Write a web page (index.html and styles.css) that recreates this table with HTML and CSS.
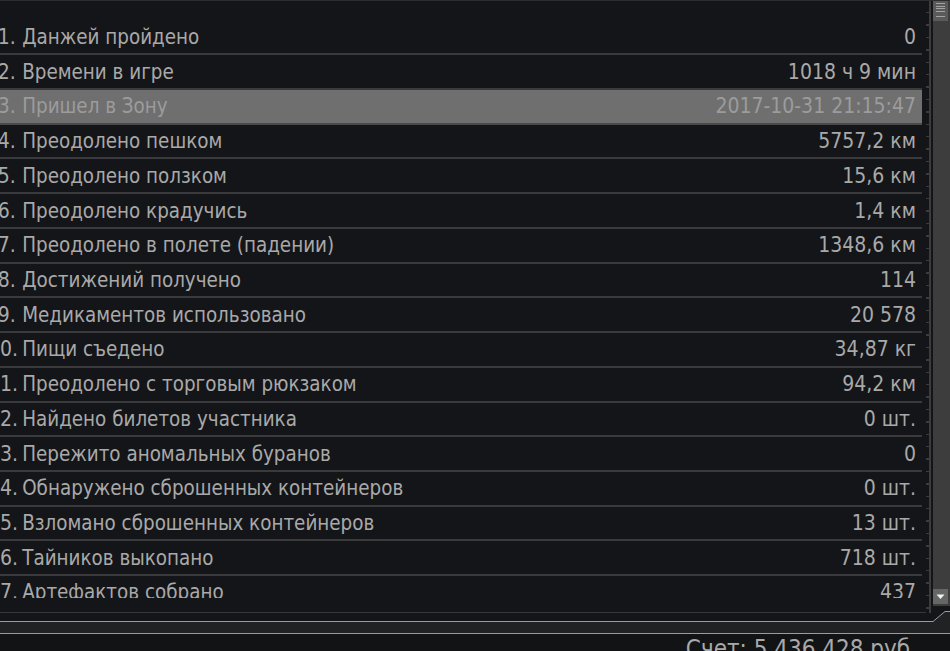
FILE: index.html
```html
<!DOCTYPE html>
<html lang="ru">
<head>
<meta charset="utf-8">
<title>Статистика</title>
<link rel="stylesheet" href="styles.css">
</head>
<body>
<div class="screen">
  <div class="main">
    <div class="listcol">
      <div class="viewport">
        <ul class="rows">
          <li class="row"><span class="num">1.</span><span class="label">Данжей пройдено</span><span class="val">0</span></li>
          <li class="row"><span class="num">2.</span><span class="label">Времени в игре</span><span class="val">1018 ч 9 мин</span></li>
          <li class="row sel"><span class="num">3.</span><span class="label">Пришел в Зону</span><span class="val">2017-10-31 21:15:47</span></li>
          <li class="row"><span class="num">4.</span><span class="label">Преодолено пешком</span><span class="val">5757,2 км</span></li>
          <li class="row"><span class="num">5.</span><span class="label">Преодолено ползком</span><span class="val">15,6 км</span></li>
          <li class="row"><span class="num">6.</span><span class="label">Преодолено крадучись</span><span class="val">1,4 км</span></li>
          <li class="row"><span class="num">7.</span><span class="label">Преодолено в полете (падении)</span><span class="val">1348,6 км</span></li>
          <li class="row"><span class="num">8.</span><span class="label">Достижений получено</span><span class="val">114</span></li>
          <li class="row"><span class="num">9.</span><span class="label">Медикаментов использовано</span><span class="val">20 578</span></li>
          <li class="row"><span class="num">10.</span><span class="label">Пищи съедено</span><span class="val">34,87 кг</span></li>
          <li class="row"><span class="num">11.</span><span class="label">Преодолено с торговым рюкзаком</span><span class="val">94,2 км</span></li>
          <li class="row"><span class="num">12.</span><span class="label">Найдено билетов участника</span><span class="val">0 шт.</span></li>
          <li class="row"><span class="num">13.</span><span class="label">Пережито аномальных буранов</span><span class="val">0</span></li>
          <li class="row"><span class="num">14.</span><span class="label">Обнаружено сброшенных контейнеров</span><span class="val">0 шт.</span></li>
          <li class="row"><span class="num">15.</span><span class="label">Взломано сброшенных контейнеров</span><span class="val">13 шт.</span></li>
          <li class="row"><span class="num">16.</span><span class="label">Тайников выкопано</span><span class="val">718 шт.</span></li>
          <li class="row"><span class="num">17.</span><span class="label">Артефактов собрано</span><span class="val">437</span></li>
        </ul>
      </div>
    </div>
    <div class="ticks"></div>
    <div class="sbline"></div>
    <div class="sbgap"></div>
    <div class="track">
      <div class="thumb"></div>
      <div class="spacer"></div>
      <div class="btn">
        <svg width="15" height="15" viewBox="0 0 15 15"><path d="M3.5 5.5 H11.5 L7.5 10 Z" fill="#f2f2f2"/></svg>
      </div>
    </div>
  </div>
  <div class="frame">
    <svg class="corner" width="17" height="12" viewBox="0 0 17 12">
      <polygon points="0,10.5 12,0.5 17,0.5 17,12 0,12" fill="#212224"/>
      <polyline points="0,10.5 12,0.5 17,0.5" fill="none" stroke="#9a9aaa" stroke-width="1"/>
    </svg>
  </div>
  <div class="footer">Счет: 5 436 428 руб.</div>
</div>
</body>
</html>
```

FILE: styles.css
```css
html, body {
  margin: 0;
  padding: 0;
}
body {
  background: #141518;
  width: 950px;
  height: 651px;
  overflow: hidden;
  font-family: "DejaVu Sans Condensed", "DejaVu Sans", sans-serif;
  color: #a9a9a9;
}
.screen {
  width: 950px;
  height: 651px;
  overflow: hidden;
  display: flex;
  flex-direction: column;
}
.main {
  display: flex;
  height: 612px;
  border-top: 1px solid #2d2d2f;
  flex: none;
}
.listcol {
  width: 926px;
  display: flex;
  flex-direction: column;
  border-bottom: 1px solid #38383a;
}
.viewport {
  height: 597px;
  overflow: hidden;
}
.rows {
  list-style: none;
  margin: 0 0 0 -12px;
  padding: 19.6px 0 0 0;
  width: 934px;
}
.row {
  display: flex;
  align-items: center;
  height: 32.73px;
  border-bottom: 2px solid #3a3a3c;
  font-size: 21px;
  padding-right: 6px;
  white-space: nowrap;
}
.row.sel {
  background: #6f6f6f;
  color: #9c9c9c;
  border-bottom-color: #4a4a4a;
}
.num {
  width: 27.7px;
  text-align: right;
  flex: none;
}
.label {
  padding-left: 6.5px;
  font-size: 20.4px;
  flex: 1;
}
.val {
  text-align: right;
}
.ticks {
  width: 3px;
  background: repeating-linear-gradient(to bottom, transparent 0, transparent 11px, #3c3c3e 11px, #3c3c3e 12.4px);
}
.sbline {
  width: 2px;
  background: #3c3c3e;
}
.sbgap {
  width: 2px;
}
.track {
  width: 17px;
  height: 605px;
  background: #3d3d3e;
  display: flex;
  flex-direction: column;
  align-items: flex-start;
}
.thumb {
  width: 15px;
  height: 20px;
  background: #5a5a5b repeating-linear-gradient(to bottom, transparent 0, transparent 1.5px, #a2a2a2 1.5px, #a2a2a2 2.5px) no-repeat 3px 1px / 9px 18px;
}
.spacer {
  flex: 1;
}
.btn {
  width: 15px;
  height: 15px;
  background: #666667;
  margin-bottom: 2px;
  display: flex;
}
.frame {
  position: relative;
  margin-top: 8px;
  height: 11px;
  border-top: 1px solid #9a9aaa;
  border-bottom: 1px solid #9a9aaa;
  background: #212224;
  flex: none;
}
.corner {
  position: absolute;
  right: 0;
  top: -11px;
}
.footer {
  background: #111315;
  flex: 1;
  font-size: 24px;
  line-height: 24px;
  padding: 3px 33px 0 0;
  text-align: right;
  white-space: nowrap;
}
```
